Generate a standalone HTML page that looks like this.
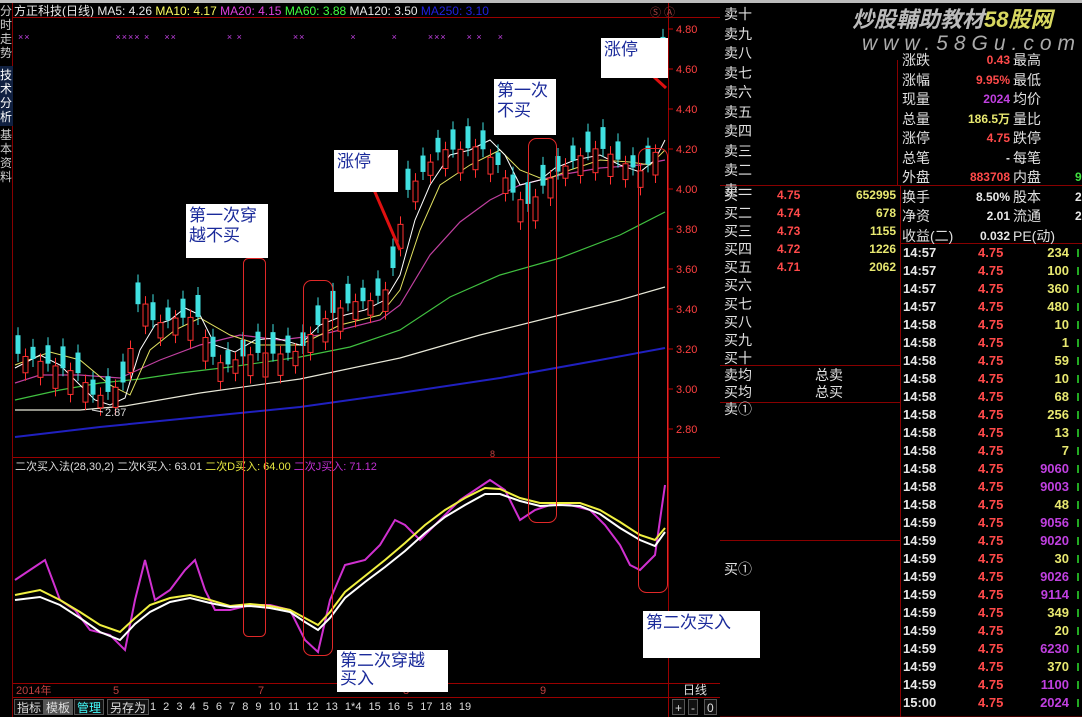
<!DOCTYPE html>
<html><head><meta charset="utf-8"><style>
*{margin:0;padding:0;box-sizing:border-box}
body{width:1082px;height:717px;background:#000;overflow:hidden;position:relative;font-family:"Liberation Sans","Noto Sans CJK SC",sans-serif;color:#ddd}
.a{position:absolute;white-space:nowrap}
.t{font-size:14px;line-height:16px;color:#e0e0e0}
.r{color:#ff4a4a}.y{color:#e8e870}.m{color:#c040e0}.w{color:#e8e8e8}
.lbl{position:absolute;background:#fff;color:#1a2a9a;font-size:17px;line-height:20px;padding:2px 3px;font-family:"Liberation Sans","Noto Sans CJK SC",sans-serif}
.btn{position:absolute;top:699px;height:16px;font-size:12px;line-height:16px;color:#ddd;background:#111;border:1px solid #555;padding:0 2px}
</style></head><body>
<div class="a" style="left:0;top:0;width:13px;height:717px;background:#000;border-right:1px solid #800"></div>
<div class="a" style="left:0;top:4px;width:13px;font-size:12px;line-height:14px;color:#ccc;white-space:normal">分时走势</div>
<div class="a" style="left:0;top:66px;width:13px;height:60px;background:#102040"></div>
<div class="a" style="left:0;top:68px;width:13px;font-size:12px;line-height:14px;color:#fff;white-space:normal">技术分析</div>
<div class="a" style="left:0;top:128px;width:13px;font-size:12px;line-height:14px;color:#ccc;white-space:normal">基本资料</div>
<div class="a" style="left:0;top:0;width:1082px;height:3px;background:#bbb"></div>
<div class="a" style="left:14px;top:4px;font-size:12px;line-height:14px">
<span class="w">方正科技(日线) MA5: 4.26</span> <span style="color:#ffff60">MA10: 4.17</span> <span style="color:#e040e0">MA20: 4.15</span> <span style="color:#40ff40">MA60: 3.88</span> <span class="w">MA120: 3.50</span> <span style="color:#2020e0">MA250: 3.10</span></div>
<div class="a" style="left:18px;top:32px;font-size:9px;color:#c040e0;letter-spacing:1px">××<span style="margin-left:85px">××××</span> ×<span style="margin-left:14px">××</span><span style="margin-left:50px">× ×</span><span style="margin-left:50px">××</span><span style="margin-left:45px">×</span><span style="margin-left:35px">×</span><span style="margin-left:30px">×××</span><span style="margin-left:20px">× ×</span><span style="margin-left:15px">×</span></div>
<svg class="a" style="left:0;top:0" width="720" height="717" id="sv">
<g stroke="#900" fill="none" stroke-width="1">
<line x1="13" y1="17.5" x2="720" y2="17.5"/>
<line x1="13" y1="457.5" x2="720" y2="457.5"/>
<line x1="13" y1="683.5" x2="720" y2="683.5"/>
<line x1="13" y1="697.5" x2="720" y2="697.5"/>
<line x1="668.5" y1="3" x2="668.5" y2="717"/>
<line x1="720.5" y1="3" x2="720.5" y2="717"/>
</g>
<g fill="#ff4040" font-size="11" font-family="Liberation Sans">
<text x="676" y="33">4.80</text><text x="676" y="73">4.60</text><text x="676" y="113">4.40</text><text x="676" y="153">4.20</text><text x="676" y="193">4.00</text><text x="676" y="233">3.80</text><text x="676" y="273">3.60</text><text x="676" y="313">3.40</text><text x="676" y="353">3.20</text><text x="676" y="393">3.00</text><text x="676" y="433">2.80</text>
</g>
<g stroke="#c00"><line x1="668" y1="29" x2="673" y2="29"/><line x1="668" y1="69" x2="673" y2="69"/><line x1="668" y1="109" x2="673" y2="109"/><line x1="668" y1="149" x2="673" y2="149"/><line x1="668" y1="189" x2="673" y2="189"/><line x1="668" y1="229" x2="673" y2="229"/><line x1="668" y1="269" x2="673" y2="269"/><line x1="668" y1="309" x2="673" y2="309"/><line x1="668" y1="349" x2="673" y2="349"/><line x1="668" y1="389" x2="673" y2="389"/><line x1="668" y1="429" x2="673" y2="429"/></g>
<polyline fill="none" stroke="#2020c0" stroke-width="2" points="15,437 100,427 200,417 300,407 400,393 500,378 600,360 665,348"/>
<polyline fill="none" stroke="#e8e8d8" stroke-width="1.2" points="15,410 80,410 125,406 200,393 300,379 400,358 480,335 560,315 620,300 665,287"/>
<polyline fill="none" stroke="#40c040" stroke-width="1.2" points="15,400 60,390 100,383 140,379 180,373 230,367 300,357 350,347 400,330 450,297 500,275 560,258 620,235 665,212"/>
<polyline fill="none" stroke="#c040a0" stroke-width="1.2" points="15,383 40,375 80,375 120,378 160,360 200,345 240,335 280,340 320,335 380,320 400,305 430,255 460,222 490,200 520,185 560,175 600,168 640,165 665,160"/>
<polyline fill="none" stroke="#e0e060" stroke-width="1" points="15,365 50,352 80,360 110,385 130,395 150,350 175,330 200,318 230,335 260,345 300,345 340,325 380,315 400,290 420,230 440,185 470,165 500,150 520,170 545,180 570,170 600,160 630,162 650,165 665,150"/>
<polyline fill="none" stroke="#fff" stroke-width="1" points="15,368 40,355 60,365 80,385 95,400 110,405 125,398 140,350 155,325 170,320 185,308 200,315 215,345 235,352 255,340 275,338 300,345 320,325 345,315 365,310 385,300 400,275 415,220 430,185 450,155 470,150 490,140 505,155 520,185 540,180 555,168 575,160 600,155 620,165 640,172 655,160 665,140"/>
<g id="cd"></g>
<text x="105" y="416" fill="#ddd" font-size="11" font-family="Liberation Sans">2.87</text>
<line x1="92" y1="410" x2="103" y2="412" stroke="#ddd"/>
<polyline fill="none" stroke="#d030d0" stroke-width="2" points="15,580 30,570 45,560 60,600 75,610 90,630 110,635 125,650 135,600 145,560 155,600 170,590 185,570 195,560 205,590 215,610 230,610 250,605 270,605 290,610 305,640 318,652 330,600 345,565 365,560 380,545 395,520 405,525 420,540 440,520 460,500 475,490 490,480 505,490 520,520 535,510 550,505 570,505 590,510 605,525 620,545 630,565 640,570 655,555 665,485"/>
<polyline fill="none" stroke="#f0f040" stroke-width="2" points="15,595 40,590 60,600 80,612 100,625 120,632 135,618 150,605 170,598 190,595 210,600 230,606 250,604 270,606 290,610 305,618 318,625 330,612 345,592 365,576 385,560 405,543 425,525 445,510 465,498 485,488 500,489 520,498 540,503 560,503 580,503 600,510 620,522 640,535 655,540 665,528"/>
<polyline fill="none" stroke="#fff" stroke-width="2" points="15,600 40,597 60,605 80,618 100,632 120,640 135,624 150,612 170,602 190,598 210,603 230,607 250,606 270,608 290,612 305,622 318,630 330,618 345,598 365,582 385,567 405,551 425,533 445,517 465,505 485,494 500,494 520,501 540,506 560,505 580,506 600,514 620,528 640,540 655,546 665,532"/>
<text x="15" y="470" font-size="11" font-family="Liberation Sans,Noto Sans CJK SC" fill="#ddd">二次买入法(28,30,2) 二次K买入: 63.01 <tspan fill="#e8e840">二次D买入: 64.00</tspan> <tspan fill="#c030d0">二次J买入: 71.12</tspan></text>
<g fill="none" stroke="#e02828" stroke-width="1">
<rect x="243.5" y="258.5" width="22" height="378" rx="5"/>
<rect x="303.5" y="280.5" width="29" height="375" rx="8"/>
<rect x="528.5" y="138.5" width="28" height="384" rx="8"/>
<rect x="638.5" y="148.5" width="29" height="444" rx="8"/>
</g>
<g stroke="#e01010" stroke-width="3"><line x1="368" y1="176" x2="400" y2="250"/><line x1="642" y1="66" x2="666" y2="88"/></g>
<g fill="#c04040" font-size="11" font-family="Liberation Sans,Noto Sans CJK SC"><text x="16" y="694">2014年</text><text x="113" y="694">5</text><text x="258" y="694">7</text><text x="403" y="694">8</text><text x="540" y="694">9</text></g>
<text x="683" y="694" font-size="12" fill="#ddd" font-family="Liberation Sans,Noto Sans CJK SC">日线</text>
<text x="650" y="16" font-size="11" fill="#a04040">Ⓢ Ⓐ</text>
<text x="490" y="457" font-size="9" fill="#c04040">8</text>
</svg>
<div class="lbl" style="left:186px;top:204px;width:82px;height:54px">第一次穿<br>越不买</div>
<div class="lbl" style="left:334px;top:150px;width:64px;height:42px">涨停</div>
<div class="lbl" style="left:494px;top:79px;width:62px;height:56px">第一次<br>不买</div>
<div class="lbl" style="left:601px;top:38px;width:67px;height:40px">涨停</div>
<div class="lbl" style="left:337px;top:650px;width:111px;height:42px;line-height:18px">第二次穿越<br>买入</div>
<div class="lbl" style="left:643px;top:611px;width:117px;height:47px">第二次买入</div>
<div class="btn" style="left:14px">指标</div><div class="btn" style="left:43px;background:#555">模板</div><div class="btn" style="left:74px;color:#4ff">管理</div><div class="btn" style="left:107px">另存为</div>
<div class="a" style="left:150px;top:699px;font-size:11px;line-height:16px;color:#ddd;word-spacing:4px">1 2 3 4 5 6 7 8 9 10 11 12 13 1*4 15 16 5 17 18 19</div>
<div class="btn" style="left:672px">+</div><div class="btn" style="left:688px">-</div><div class="btn" style="left:704px">0</div>
<svg class="a" style="left:720px;top:0" width="362" height="717">
<g stroke="#800"><line x1="0" y1="185.5" x2="362" y2="185.5"/><line x1="177.5" y1="60" x2="177.5" y2="185"/><line x1="180.5" y1="185" x2="180.5" y2="717"/><line x1="0" y1="365.5" x2="180" y2="365.5"/><line x1="0" y1="402.5" x2="180" y2="402.5"/><line x1="0" y1="540.5" x2="180" y2="540.5"/><line x1="180" y1="243.5" x2="362" y2="243.5"/><line x1="0" y1="717" x2="362" y2="717"/></g>
</svg>
<div class="a" style="left:852px;top:2px;font-size:22px;font-style:italic;font-weight:bold;color:#bbb">炒股輔助教材<span style="color:#d8d860">58股网</span></div>
<div class="a" style="left:862px;top:32px;font-size:21px;font-style:italic;color:#aaa;letter-spacing:6px">www.58Gu.com</div>
<div class="a t" style="left:724px;top:5px;line-height:19.5px;white-space:pre">卖十
卖九
卖八
卖七
卖六
卖五
卖四
卖三
卖二
卖一</div>
<div class="a t" style="left:724px;top:186px;line-height:18.1px;white-space:pre">买一
买二
买三
买四
买五
买六
买七
买八
买九
买十</div>
<div class="a t r" style="left:777px;top:186px;line-height:18.1px;white-space:pre;font-size:12px;font-weight:bold">4.75
4.74
4.73
4.72
4.71</div>
<div class="a t y" style="left:820px;top:186px;width:76px;text-align:right;line-height:18.1px;white-space:pre;font-size:12px;font-weight:bold">652995
678
1155
1226
2062</div>
<div class="a t" style="left:724px;top:367px;line-height:17px;white-space:pre">卖均
买均
卖①</div>
<div class="a t" style="left:815px;top:367px;line-height:17px;white-space:pre">总卖
总买</div>
<div class="a t" style="left:724px;top:561px">买①</div>
<div class="a t" style="left:902px;top:51px;line-height:19.5px;white-space:pre">涨跌
涨幅
现量
总量
涨停
总笔
外盘
换手
净资
收益(二)</div>
<div class="a t" style="left:1013px;top:51px;line-height:19.5px;white-space:pre">最高
最低
均价
量比
跌停
每笔
内盘
股本
流通
PE(动)</div>
<div class="a" style="left:960px;top:51px;width:50px;text-align:right;font-size:12px;font-weight:bold;line-height:19.5px;white-space:pre"><span class="r">0.43</span>
<span class="r">9.95%</span>
<span class="m">2024</span>
<span class="y">186.5万</span>
<span class="r">4.75</span>
<span class="w">-</span>
<span class="r">883708</span>
<span class="w">8.50%</span>
<span class="w">2.01</span>
<span class="w">0.032</span></div>
<div class="a" style="left:1075px;top:168px;font-size:12px;font-weight:bold;line-height:19.5px;white-space:pre"><span style="color:#40e040">9</span>
<span class="w">2</span>
<span class="w">2</span></div>
<div id="tl"></div>
<script>
var s='';var t=['14:57','14:57','14:57','14:57','14:58','14:58','14:58','14:58','14:58','14:58','14:58','14:58','14:58','14:58','14:58','14:59','14:59','14:59','14:59','14:59','14:59','14:59','14:59','14:59','14:59','15:00'];
var v=['234','100','360','480','10','1','59','10','68','256','13','7','9060','9003','48','9056','9020','30','9026','9114','349','20','6230','370','1100','2024'];
for(var i=0;i<26;i++){var y=245+i*18;var c=(v[i].length==4)?'#c040e0':'#e8e870';
s+='<div class="a" style="left:903px;top:'+y+'px;font-size:13px;line-height:16px;color:#e8e8e8;font-weight:bold">'+t[i]+'</div><div class="a" style="left:978px;top:'+y+'px;font-size:13px;line-height:16px;color:#ff4a4a;font-weight:bold">4.75</div><div class="a" style="left:1020px;top:'+y+'px;width:49px;text-align:right;font-size:13px;line-height:16px;color:'+c+';font-weight:bold">'+v[i]+'</div><div class="a" style="left:1077px;top:'+(y+4)+'px;width:2px;height:8px;background:#2a2"></div>';}
document.getElementById('tl').innerHTML=s;
var P=[[20,3.2],[40,3.15],[60,3.1],[80,3.05],[95,2.92],[110,2.95],[125,3.0],[140,3.45],[155,3.3],[175,3.35],[200,3.38],[210,3.2],[225,3.15],[240,3.2],[260,3.22],[280,3.2],[300,3.2],[315,3.3],[330,3.35],[350,3.4],[370,3.4],[385,3.45],[395,3.6],[405,3.95],[420,4.05],[440,4.2],[460,4.22],[480,4.25],[500,4.15],[515,4.0],[530,3.95],[545,4.05],[560,4.1],[580,4.15],[600,4.18],[620,4.1],[640,4.05],[655,4.12],[665,4.75]];
function Y(p){return 29+(4.8-p)*200}
var g='';for(var x=18;x<668;x+=7.5){var j=0;while(j<P.length-1&&P[j+1][0]<x)j++;var a=P[j],b=P[Math.min(j+1,P.length-1)];var f=b[0]==a[0]?0:(x-a[0])/(b[0]-a[0]);var p=a[1]+(b[1]-a[1])*f+Math.sin(x*1.7)*0.04;
var up=(Math.floor(x*13)%3)!=0;var o=up?p-0.06-Math.abs(Math.sin(x))*0.06:p+0.06+Math.abs(Math.cos(x))*0.05;var hi=Math.max(o,p)+0.04,lo=Math.min(o,p)-0.04;var col=up?'#ff3030':'#40e0e0';
g+='<line x1="'+x+'" y1="'+Y(hi)+'" x2="'+x+'" y2="'+Y(lo)+'" stroke="'+col+'"/>';var t1=Y(Math.max(o,p)),h=Math.max(1,Y(Math.min(o,p))-t1);
g+=up?'<rect x="'+(x-2.5)+'" y="'+t1+'" width="5" height="'+h+'" fill="#000" stroke="'+col+'"/>':'<rect x="'+(x-2.5)+'" y="'+t1+'" width="5" height="'+h+'" fill="'+col+'"/>';}
document.getElementById('cd').innerHTML=g;
</script>
</body></html>
